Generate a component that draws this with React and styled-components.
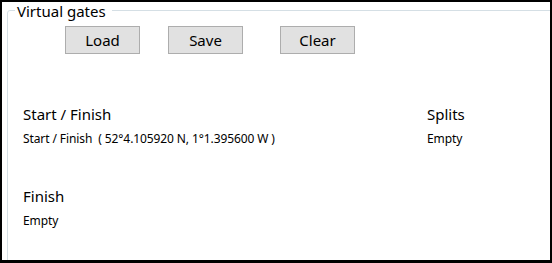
import React from "react";
import styled, { createGlobalStyle } from "styled-components";

const Global = createGlobalStyle`
  html, body { margin: 0; padding: 0; background: #ffffff; }
  body { font-family: "Noto Sans", "Open Sans", sans-serif; color: #000; }
`;

const Frame = styled.div`
  box-sizing: border-box;
  width: 552px;
  height: 263px;
  border: 2px solid #000;
  border-bottom-width: 3px;
  background: #fff;
  overflow: hidden;
  padding: 8px 0 0 5px;
`;

const Group = styled.section`
  position: relative;
  box-sizing: border-box;
  width: 560px;
  height: 270px;
  border: 1px solid #d5dfe5;
  border-radius: 3px;
  padding: 15px 0 0 0;
`;

const Legend = styled.span`
  position: absolute;
  top: -10px;
  left: 7px;
  padding: 0 6px 0 2px;
  background: #fff;
  font-size: 15px;
  line-height: 20px;
`;

const ButtonRow = styled.div`
  display: flex;
  padding-left: 57px;
`;

const Button = styled.button`
  box-sizing: border-box;
  width: 75px;
  height: 28px;
  margin: 0 0 0 ${(p) => p.$offset || 0}px;
  padding: 0;
  border: 1px solid #adadad;
  background: #e1e1e1;
  font-family: inherit;
  font-size: 15px;
  color: #000;
`;

const Columns = styled.div`
  display: grid;
  grid-template-columns: 404px 1fr;
  padding: 50px 0 0 15px;
`;

const Column = styled.div`
  display: flex;
  flex-direction: column;
  gap: 39px;
`;

const Section = styled.div`
  display: flex;
  flex-direction: column;
`;

const Heading = styled.div`
  font-size: 15px;
  line-height: 20px;
`;

const Entry = styled.div`
  font-size: 12px;
  line-height: 16px;
  margin-top: 7px;
  white-space: pre;
  letter-spacing: -0.1px;
`;

export default function App() {
  return (
    <>
      <Global />
      <Frame>
        <Group>
          <Legend>Virtual gates</Legend>
          <ButtonRow>
            <Button>Load</Button>
            <Button $offset={28}>Save</Button>
            <Button $offset={37}>Clear</Button>
          </ButtonRow>
          <Columns>
            <Column>
              <Section>
                <Heading>Start / Finish</Heading>
                <Entry>{"Start / Finish  ( 52°4.105920 N, 1°1.395600 W )"}</Entry>
              </Section>
              <Section>
                <Heading>Finish</Heading>
                <Entry>Empty</Entry>
              </Section>
            </Column>
            <Column>
              <Section>
                <Heading>Splits</Heading>
                <Entry>Empty</Entry>
              </Section>
            </Column>
          </Columns>
        </Group>
      </Frame>
    </>
  );
}
